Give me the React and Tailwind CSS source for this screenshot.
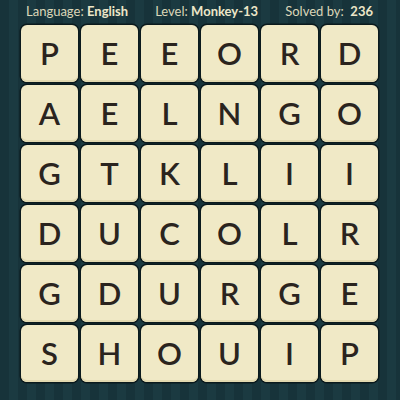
import React from "react";

const ROWS = [
  ["P", "E", "E", "O", "R", "D"],
  ["A", "E", "L", "N", "G", "O"],
  ["G", "T", "K", "L", "I", "I"],
  ["D", "U", "C", "O", "L", "R"],
  ["G", "D", "U", "R", "G", "E"],
  ["S", "H", "O", "U", "I", "P"],
];

const Tile = ({ letter }) => (
  <div className="w-[57px] h-[57px] rounded-[6px] bg-[#f0e9c6] shadow-[0_0_0_1.5px_#0b1a1d,inset_0_-2px_0_#e2d9b0] flex items-center justify-center text-[31px] font-semibold text-[#2a241e] leading-none">
    {letter}
  </div>
);

export default function App() {
  return (
    <div
      className="w-[400px] h-[400px] overflow-hidden bg-[repeating-linear-gradient(90deg,#17333a_0px,#17333a_9px,#1b3a41_9px,#1b3a41_18px)] text-[#dcd6b8]"
      style={{ fontFamily: "Lato, 'Noto Sans', sans-serif" }}
    >
      {/* header */}
      <div className="h-[23px] flex items-center justify-between pl-[26px] pr-[27px] text-[13px]">
        <span>
          Language: <span className="font-bold text-[#ece6c8]">English</span>
        </span>
        <span>
          Level: <span className="font-bold text-[#ece6c8]">Monkey-13</span>
        </span>
        <span>
          Solved by:&nbsp; <span className="font-bold text-[#ece6c8]">236</span>
        </span>
      </div>

      {/* board */}
      <div className="pl-[21px] pt-[2px]">
        <div className="grid grid-cols-[repeat(6,57px)] gap-[3px] w-max">
          {ROWS.flat().map((l, i) => (
            <Tile key={i} letter={l} />
          ))}
        </div>
      </div>
    </div>
  );
}
